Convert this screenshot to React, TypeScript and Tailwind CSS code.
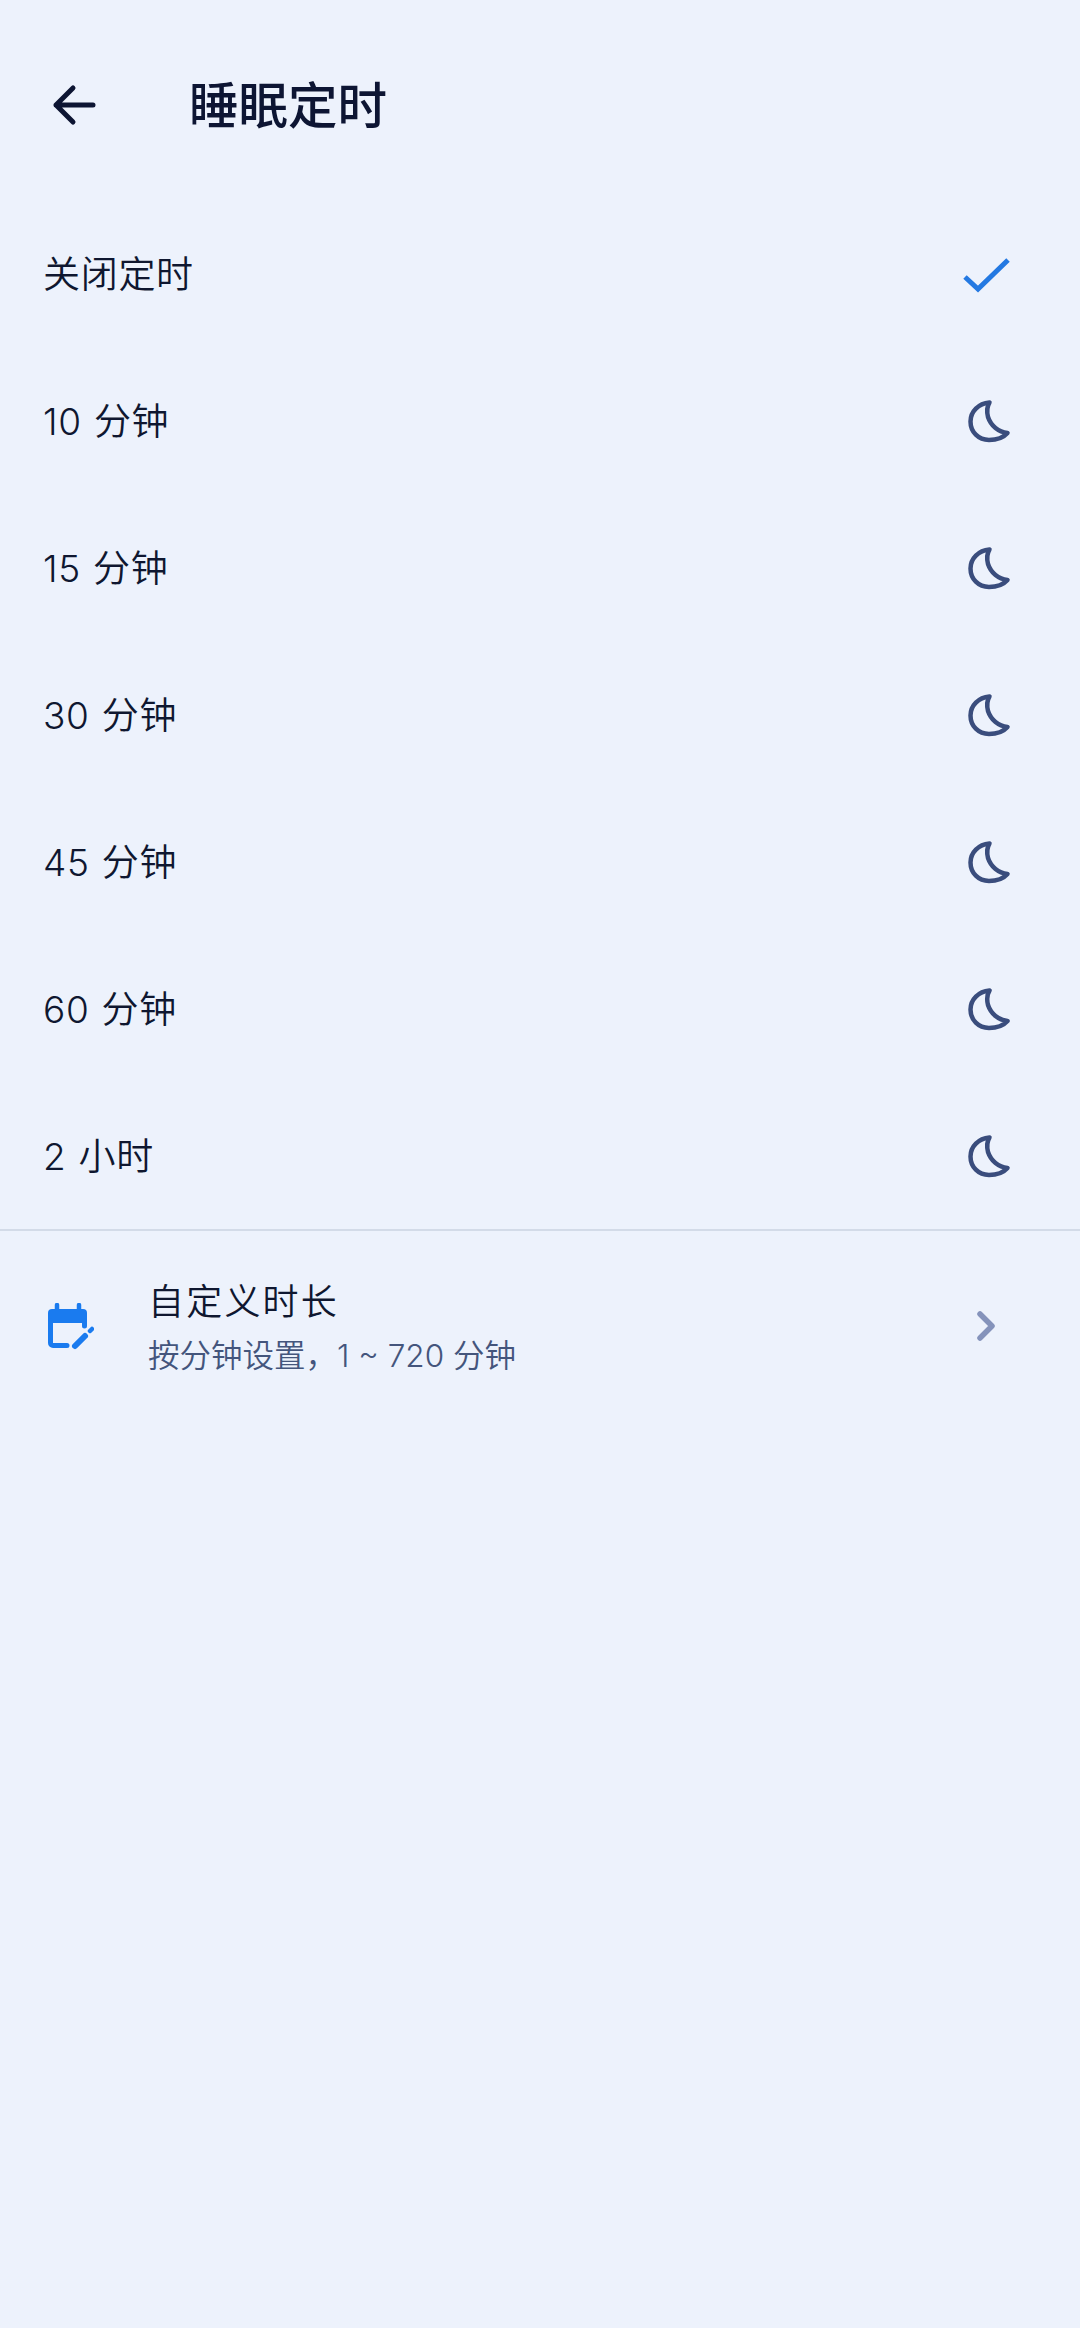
function Moon() {
  return (
    <svg width="44" height="44" viewBox="0 0 44 44" fill="none" className="shrink-0">
      <path
        d="M22.500 3.500C11.500 4.500 3.500 12.500 3.500 22.500C3.500 33 11.500 41 22 41C29.500 41 36.500 38.500 40.500 34C31.500 33 24 27 21 18C19.500 12 20 7.500 22.500 3.500Z"
        stroke="#3a4d7d"
        strokeWidth="4.500"
        strokeLinejoin="round"
      />
    </svg>
  );
}

function Row({ label, icon }: { label: string; icon: React.ReactNode }) {
  return (
    <div className="flex h-[147px] items-center justify-between pl-[43px] pr-[69px]">
      <span className="pt-[1px] text-[37px] leading-none tracking-[0.7px] [word-spacing:1px] text-[#0f1730] font-[350]">{label}</span>
      {icon}
    </div>
  );
}

export default function App() {
  const rows = ["10 分钟", "15 分钟", "30 分钟", "45 分钟", "60 分钟", "2 小时"];
  return (
    <div className="flex h-[2328px] w-[1080px] flex-col overflow-hidden bg-[#edf2fc]" style={{ fontFamily: 'Inter, "Noto Sans CJK SC", sans-serif' }}>
      <header className="flex h-[200px] items-start pl-[50px] pt-[76px]">
        <svg width="46" height="46" viewBox="0 0 46 46" fill="none" className="mt-[6px] shrink-0">
          <path d="M43 23H6M23 6L6 23l17 17" stroke="#0d1533" strokeWidth="5" strokeLinecap="round" strokeLinejoin="round" />
        </svg>
        <h1 className="ml-[93px] mt-[1px] text-[49.500px] font-medium leading-[58px] text-[#0d1533]">睡眠定时</h1>
      </header>

      <Row
        label="关闭定时"
        icon={
          <svg width="50" height="40" viewBox="0 0 50 40" fill="none" className="-mr-[1px] shrink-0">
            <path d="M3 23l13 12L46 6" stroke="#2479e2" strokeWidth="5" />
          </svg>
        }
      />
      {rows.map((r) => (
        <Row key={r} label={r} icon={<Moon />} />
      ))}

      <div className="h-[2px] bg-[#d3dbe8]" />

      <div className="flex h-[190px] items-center pl-[46px] pr-[82px]">
        <svg width="48" height="48" viewBox="0 0 48 48" fill="none" className="mt-[2px] shrink-0">
          <path d="M11 2v5M33 2v5" stroke="#1a7bef" strokeWidth="4.500" strokeLinecap="round" />
          <path d="M2 10a4 4 0 0 1 4-4h31a4 4 0 0 1 4 4v10H2z" fill="#1a7bef" />
          <path d="M4.500 18v22a2.500 2.500 0 0 0 2.500 2.500h14M38.500 18v5" stroke="#1a7bef" strokeWidth="5" strokeLinecap="round" />
          <path d="M29 43l10-10" stroke="#1a7bef" strokeWidth="6" strokeLinecap="round" />
          <path d="M44 28l2-2" stroke="#1a7bef" strokeWidth="4.500" strokeLinecap="round" />
        </svg>
        <div className="ml-[54px] mt-[2px] flex flex-1 flex-col">
          <span className="text-[36px] leading-[50px] tracking-[2.200px] text-[#0f1730] font-[350]">自定义时长</span>
          <span className="mt-[7px] text-[31.500px] leading-[44px] text-[#44557c] font-[350]">按分钟设置，1 ~ 720 分钟</span>
        </div>
        <svg width="24" height="36" viewBox="0 0 24 36" fill="none" className="shrink-0">
          <path d="M6 6l12 12L6 30" stroke="#8593bb" strokeWidth="5.500" strokeLinecap="round" strokeLinejoin="round" />
        </svg>
      </div>
    </div>
  );
}
